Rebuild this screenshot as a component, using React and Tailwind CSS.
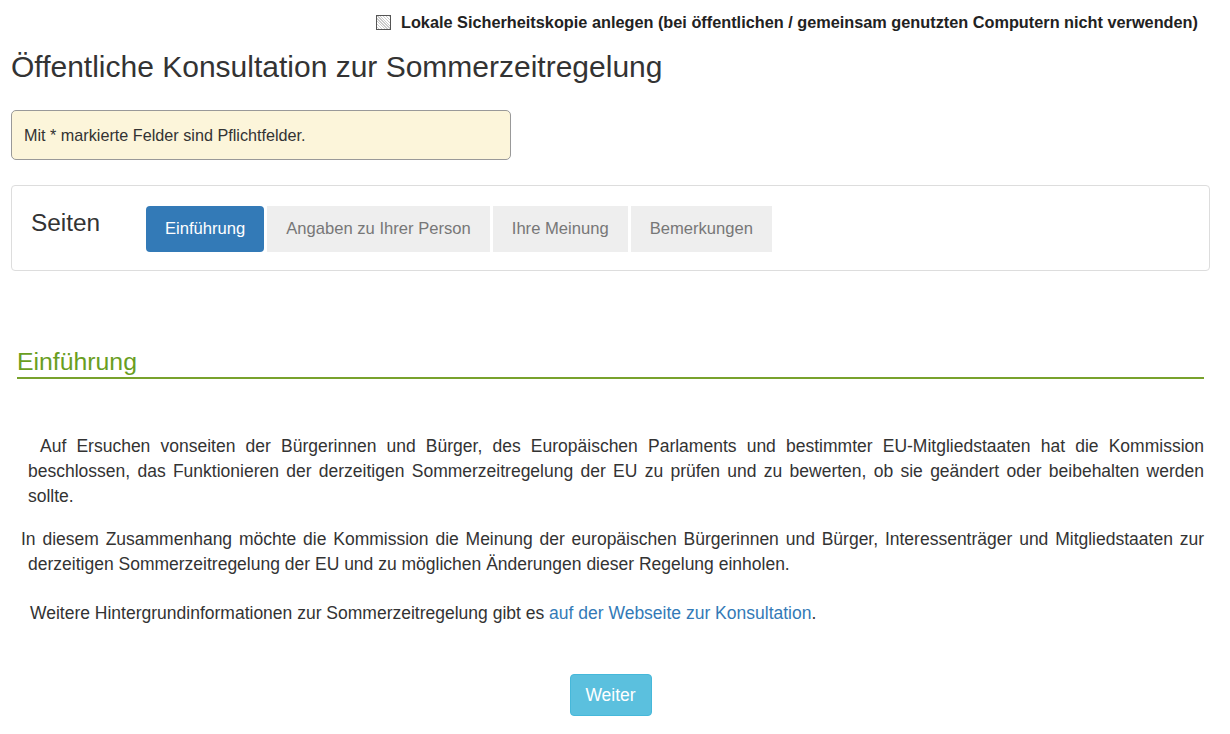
import React from "react";

const tabs = ["Einführung", "Angaben zu Ihrer Person", "Ihre Meinung", "Bemerkungen"];

export default function App() {
  return (
    <div className="min-h-[734px] bg-white text-[#333] font-['Liberation_Sans',Arial,sans-serif]">
      {/* Lokale Sicherheitskopie */}
      <div className="flex justify-end items-center gap-[10px] pt-[12px] pr-[32px] h-[32px]">
        <span className="w-[15px] h-[15px] border border-[#555] bg-[repeating-linear-gradient(45deg,#fff_0px,#fff_1px,#ccc_1px,#ccc_2px)]"></span>
        <span className="text-[16.3px] font-bold text-[#222]">
          Lokale Sicherheitskopie anlegen (bei öffentlichen / gemeinsam genutzten Computern nicht verwenden)
        </span>
      </div>

      <div className="pl-[11px] pr-[20px]">
        <h1 className="text-[30px] leading-[36px] mt-[17px] text-[#333]">
          Öffentliche Konsultation zur Sommerzeitregelung
        </h1>

        {/* Pflichtfelder Hinweis */}
        <div className="w-[500px] h-[50px] mt-[25px] flex items-center px-[12px] bg-[#fcf5da] border border-[#999] rounded-[5px] text-[16.2px] text-[#333]">
          Mit * markierte Felder sind Pflichtfelder.
        </div>

        {/* Seiten */}
        <div className="mt-[25px] h-[86px] border border-[#ddd] rounded-[4px] flex items-start pt-[19px] pl-[19px]">
          <div className="text-[24.4px] leading-[36px] w-[115px]">Seiten</div>
          <div className="flex gap-[3px] mt-[1px]">
            {tabs.map((t, i) => (
              <div
                key={t}
                className={
                  i === 0
                    ? "h-[46px] px-[19px] flex items-center rounded-[4px] bg-[#337ab7] text-white text-[16.6px]"
                    : "h-[46px] px-[19px] flex items-center bg-[#eee] text-[#777] text-[16.6px]"
                }
              >
                {t}
              </div>
            ))}
          </div>
        </div>

        {/* Einführung */}
        <div className="mx-[6px] mt-[76px] border-b-2 border-[#78a22c]">
          <h2 className="text-[24.8px] leading-[30px] text-[#6a9e1f]">Einführung</h2>
        </div>

        <div className="mt-[55px] pl-[17px] pr-[6px] text-[17.5px] leading-[25px] text-[#333]">
          <p className="text-justify indent-[12px]">
            Auf Ersuchen vonseiten der Bürgerinnen und Bürger, des Europäischen Parlaments und bestimmter EU-Mitgliedstaaten hat die Kommission beschlossen, das Funktionieren der derzeitigen Sommerzeitregelung der EU zu prüfen und zu bewerten, ob sie geändert oder beibehalten werden sollte.
          </p>
          <p className="text-justify mt-[18px] -indent-[7px]">
            In diesem Zusammenhang möchte die Kommission die Meinung der europäischen Bürgerinnen und Bürger, Interessenträger und Mitgliedstaaten zur derzeitigen Sommerzeitregelung der EU und zu möglichen Änderungen dieser Regelung einholen.
          </p>
          <p className="mt-[24px] pl-[2px]">
            Weitere Hintergrundinformationen zur Sommerzeitregelung gibt es{" "}
            <a className="text-[#337ab7]">auf der Webseite zur Konsultation</a>.
          </p>
        </div>

        <div className="flex justify-center mt-[48px]">
          <button className="w-[82px] h-[42px] rounded-[4px] bg-[#5bc0de] border border-[#46b8da] text-white text-[17.5px]">
            Weiter
          </button>
        </div>
      </div>
    </div>
  );
}
